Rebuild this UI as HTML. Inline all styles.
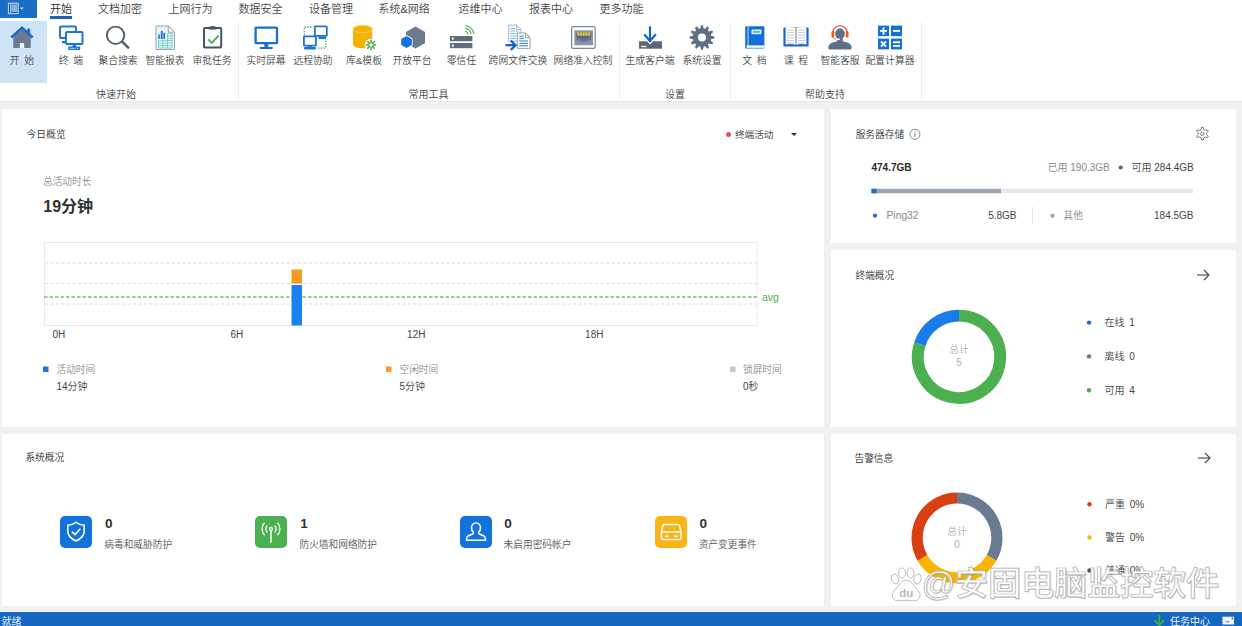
<!DOCTYPE html>
<html lang="zh-CN">
<head>
<meta charset="utf-8">
<title>安固电脑监控软件</title>
<style>
*{box-sizing:border-box;margin:0;padding:0}
html,body{width:1242px;height:626px;overflow:hidden;background:#f1f1f1;}
body{font-family:"Liberation Sans","Noto Sans CJK SC",sans-serif;color:#333;position:relative;font-size:10px;font-weight:350;}
.abs{position:absolute}
#ribbon{position:absolute;left:0;top:0;width:1242px;height:102px;background:#fff;border-bottom:1px solid #e6e6e6}
#appbtn{position:absolute;left:0;top:0;width:36.700px;height:18.400px;background:#1a6ec3}
.tab{position:absolute;top:1px;height:18px;line-height:17px;font-size:11px;color:#444;white-space:nowrap}
.tab.on{color:#2a2a2a}
.bl{position:absolute;top:54px;word-spacing:2px;font-size:9.800px;line-height:14px;color:#4a4a4a;white-space:pre;transform:translateX(-50%)}
.gl{position:absolute;top:88px;font-size:10px;line-height:14px;color:#444;white-space:nowrap;transform:translateX(-50%)}
.sep{position:absolute;top:22px;width:1px;height:77px;background:#eeeeee}
.card{position:absolute;background:#fff}
.ttl{position:absolute;font-size:10px;line-height:14px;color:#333;white-space:nowrap}
.t{position:absolute;white-space:nowrap;line-height:14px;font-size:10px}
#wm{position:absolute;left:921.500px;top:559.500px;font-size:33.300px;line-height:48px;color:#fff;white-space:nowrap;font-weight:500;-webkit-text-stroke:0.7px #ababab;text-shadow:1px 1px 1px rgba(120,120,120,.35);letter-spacing:-0.3px}
#status{position:absolute;left:0;top:612px;width:1242px;height:14px;background:#1567c2;color:#fff;font-size:10px;line-height:14px}
</style>
</head>
<body>
<div id="ribbon">
  <div id="appbtn"></div>
  <div class="tab on" style="left:50px">开始</div>
  <div class="abs" style="left:50px;top:16px;width:22px;height:2.5px;background:#1a62b8"></div>
  <div class="tab" style="left:98px">文档加密</div>
  <div class="tab" style="left:168.500px">上网行为</div>
  <div class="tab" style="left:238.500px">数据安全</div>
  <div class="tab" style="left:309px">设备管理</div>
  <div class="tab" style="left:378.500px">系统&amp;网络</div>
  <div class="tab" style="left:458.500px">运维中心</div>
  <div class="tab" style="left:529px">报表中心</div>
  <div class="tab" style="left:599.500px">更多功能</div>
<div class="abs" style="left:0;top:21px;width:47px;height:62px;background:#cee3f6"></div>
<svg class="abs" style="left:0;top:0" width="1242" height="102" viewBox="0 0 1242 102">
<g><rect x="8.500" y="3.300" width="9.600" height="10.200" fill="none" stroke="#a9d5ff" stroke-width="1.200"/><rect x="10" y="3.300" width="0.900" height="10.200" fill="#a9d5ff"/><rect x="11.400" y="4.600" width="5.600" height="7.500" fill="#8fb2dc"/><rect x="11.400" y="12.100" width="5.600" height="0.700" fill="#0e4a8e"/><rect x="9.100" y="4" width="0.800" height="9" fill="#0e4a8e"/></g><path d="M19.800,7.500 h4.200 l-2.100,2.300z" fill="#b9dcff"/>
<g><polygon points="13.3,37 22,29.3 30.7,37 30.7,48 13.3,48" fill="#6a7a90"/><rect x="27.3" y="28.6" width="2.8" height="6" fill="#1b6ec2"/><polyline points="11.3,37.6 22,27.8 32.7,37.6" fill="none" stroke="#1b6ec2" stroke-width="2.7"/><rect x="19.8" y="43" width="4.4" height="5" fill="#eaf3fc"/></g>
<g fill="none" stroke="#1b75d0" stroke-width="1.9"><rect x="60" y="26.5" width="16" height="11.5" rx="0.8" fill="#fff"/><path d="M62,41 h3 v2.2 h-3z" fill="#1b75d0" stroke="none"/><rect x="66" y="32" width="16.5" height="12" rx="0.8" fill="#fff"/></g><rect x="72.6" y="44" width="3.4" height="3" fill="#1b75d0"/><rect x="68.2" y="46.6" width="12" height="3.4" rx="0.8" fill="#1b75d0"/><rect x="70" y="47.9" width="5.5" height="0.9" fill="#9cd0ff"/><rect x="77" y="47.8" width="1.2" height="1.1" fill="#cfe8ff"/>
<g fill="none" stroke="#56606e"><circle cx="115.600" cy="35.300" r="8.700" stroke-width="1.900"/><line x1="122.4" y1="42" x2="128.3" y2="47.6" stroke-width="2.5" stroke-linecap="round"/></g>
<g><path d="M156,26 h12.3 l6.2,6.2 v17.3 h-18.5z" fill="#e3f5f9" stroke="#8d97a8" stroke-width="0.9"/><path d="M168.3,26 v6.2 h6.2z" fill="#fff" stroke="#8d97a8" stroke-width="0.9"/><g stroke="#6ccdbf" stroke-width="0.8" fill="none"><path d="M158.5,40.5 h13.5 M158.5,43 h13.5 M158.5,45.5 h13.5 M158.5,48 h13.5 M158.5,40.5 v7.5 M163,40.5 v7.5 M167.5,33.5 v14.5 M172,33.5 v14.5 M167.5,33.5 h4.5 M167.5,36 h4.5 M167.5,38.2 h4.5"/></g><rect x="158.3" y="34.5" width="1.5" height="4.5" fill="#1e6bc6"/><rect x="160.8" y="31" width="1.8" height="8" fill="#1e6bc6"/><rect x="163.4" y="32.8" width="1.6" height="6.2" fill="#1e6bc6"/></g>
<g><rect x="204" y="28" width="17.2" height="19.5" rx="0.8" fill="#fafbfc" stroke="#4a5363" stroke-width="2"/><path d="M208.600,29.400 l0.800,-2.800 h1.800 a1.500,1.500 0 0 1 2.800,0 h1.800 l0.800,2.800z" fill="#4a5363"/><polyline points="208.3,39.3 211.8,42.8 218.6,35.6" fill="none" stroke="#4caf50" stroke-width="1.9"/></g>
<g><rect x="255.6" y="27.6" width="21.4" height="15.6" rx="0.6" fill="#fff" stroke="#1a6dc8" stroke-width="2.3"/><rect x="264.4" y="44" width="3.8" height="3.4" fill="#1a6dc8"/><rect x="260" y="47" width="12.6" height="2" fill="#1a6dc8"/></g>
<g><g fill="none" stroke="#3fa63f" stroke-width="1.3" stroke-dasharray="1.3,1.5"><path d="M311.5,27 h-7.2 v8"/><path d="M318,48.2 h7.8 v-9.5"/></g><rect x="314.8" y="26.3" width="12" height="9.6" rx="0.6" fill="#fff" stroke="#1b75d0" stroke-width="1.8"/><rect x="318.5" y="36.6" width="7.5" height="2.4" fill="#1b75d0"/><rect x="303.9" y="36.3" width="12" height="9.4" rx="0.6" fill="#fff" stroke="#1b75d0" stroke-width="1.8"/><rect x="308.2" y="45.6" width="3.4" height="2" fill="#1b75d0"/><rect x="304" y="47" width="12" height="2.6" rx="0.8" fill="#1b75d0"/></g>
<g><path d="M353,29 v15.6 a9.6,3.6 0 0 0 19.2,0 v-15.6z" fill="#f5b200"/><ellipse cx="362.6" cy="29" rx="9.6" ry="3.6" fill="#f5b200" stroke="#fbd35a" stroke-width="0.9"/><circle cx="371" cy="45" r="6.2" fill="#fff"/><g stroke="#3aa83a" stroke-width="1.5"><line x1="372.60" y1="45.00" x2="376.20" y2="45.00"/><line x1="372.13" y1="46.13" x2="374.68" y2="48.68"/><line x1="371.00" y1="46.60" x2="371.00" y2="50.20"/><line x1="369.87" y1="46.13" x2="367.32" y2="48.68"/><line x1="369.40" y1="45.00" x2="365.80" y2="45.00"/><line x1="369.87" y1="43.87" x2="367.32" y2="41.32"/><line x1="371.00" y1="43.40" x2="371.00" y2="39.80"/><line x1="372.13" y1="43.87" x2="374.68" y2="41.32"/></g></g>
<g><polygon points="415.5,26.6 425,32 425,43.3 415.5,48.6 406,43.3 406,32" fill="#6b7a8d"/><polygon points="406.5,35 412.6,38.5 412.6,45.5 406.5,49 400.4,45.5 400.4,38.5" fill="#fff"/><polygon points="406.5,36 411.8,39 411.8,45 406.5,48 401.2,45 401.2,39" fill="#1273de"/></g>
<g><rect x="450" y="36" width="22.4" height="5.2" fill="#5f6b7e"/><rect x="450" y="43" width="22.4" height="5.2" fill="#5f6b7e"/><rect x="452" y="37.5" width="1.7" height="2.2" fill="#fff"/><rect x="452" y="44.5" width="1.7" height="2.2" fill="#fff"/><g fill="none" stroke="#4caf50" stroke-width="1.1"><path d="M465,31.2 a3.8,3.8 0 0 1 3.3,3.3"/><path d="M465.3,28.4 a6.6,6.6 0 0 1 5.8,5.8"/><path d="M465.6,25.6 a9.4,9.4 0 0 1 8.3,8.3"/></g></g>
<g><path d="M508.6,25 h8 l4.4,4.4 v12 h-12.4z" fill="#eef6fd" stroke="#a4afc0" stroke-width="0.8"/><path d="M516.6,25 v4.4 h4.4z" fill="#fff" stroke="#a4afc0" stroke-width="0.8"/><path d="M510.3,28.5 h5 M510.3,31 h8.5 M510.3,33.5 h6 M510.3,36 h6 M510.3,38.5 h6" stroke="#8fc1ee" stroke-width="0.9"/><path d="M517.4,33 h8 l4.6,4.6 v10.8 h-12.6z" fill="#fff" stroke="#8d97a8" stroke-width="0.9"/><path d="M525.4,33 v4.6 h4.6z" fill="#f2f6fa" stroke="#8d97a8" stroke-width="0.9"/><path d="M519.3,36.2 h4.5 M519.3,38.4 h4.5 M519.3,41 h8.7 M519.3,43.4 h8.7 M519.3,45.8 h8.7" stroke="#2a7fd8" stroke-width="1"/><g fill="none" stroke="#1565c0" stroke-width="2.3"><line x1="505.5" y1="45.2" x2="515" y2="45.2"/><polyline points="510.8,40.6 515.6,45.2 510.8,49.8"/></g></g>
<g><defs><linearGradient id="na" x1="0" y1="0" x2="0" y2="1"><stop offset="0" stop-color="#d9c23a"/><stop offset="0.33" stop-color="#e8d13c"/><stop offset="0.42" stop-color="#4e62a8"/><stop offset="0.8" stop-color="#6f7fb5"/><stop offset="1" stop-color="#8d97ab"/></linearGradient></defs><rect x="571.6" y="26.6" width="23.6" height="21.8" rx="1.6" fill="#fcfcfe" stroke="#7d8797" stroke-width="1.2"/><rect x="574.4" y="30.4" width="18.6" height="14.8" fill="#8892a6"/><path d="M576.400,33 h14.600 v6 q-7.300,5.500 -14.600,0z" fill="#59668f"/><path d="M576.400,37 q7.300,4.500 14.600,0 v2 q-7.300,5.500 -14.600,0z" fill="#6b78a2"/><rect x="577" y="32.300" width="13.400" height="3.800" fill="#a8a24a" opacity="0.75"/><g fill="#e6cc3a"><rect x="577.600" y="32.600" width="1.700" height="2.800"/><rect x="580.200" y="32.600" width="1.700" height="2.800"/><rect x="582.800" y="32.600" width="1.700" height="2.800"/><rect x="585.400" y="32.600" width="1.700" height="2.800"/><rect x="588" y="32.600" width="1.700" height="2.800"/></g></g>
<g><rect x="639" y="41.3" width="23" height="7.4" fill="#5b6779"/><polygon points="646.8,41.3 650,44.4 653.2,41.3" fill="#fff"/><rect x="641.3" y="45.8" width="5" height="1.4" fill="#fff"/><g fill="none" stroke="#1565c0" stroke-width="2.2"><line x1="650" y1="26.4" x2="650" y2="41"/><polyline points="644.2,34.2 650,41 655.8,34.2"/></g></g>
<path d="M700.23,28.47 L701.09,25.13 L702.91,25.13 L703.77,28.47 L704.98,28.80 L707.40,26.34 L708.97,27.24 L708.05,30.57 L708.93,31.45 L712.26,30.53 L713.16,32.10 L710.70,34.52 L711.03,35.73 L714.37,36.59 L714.37,38.41 L711.03,39.27 L710.70,40.48 L713.16,42.90 L712.26,44.47 L708.93,43.55 L708.05,44.43 L708.97,47.76 L707.40,48.66 L704.98,46.20 L703.77,46.53 L702.91,49.87 L701.09,49.87 L700.23,46.53 L699.02,46.20 L696.60,48.66 L695.03,47.76 L695.95,44.43 L695.07,43.55 L691.74,44.47 L690.84,42.90 L693.30,40.48 L692.97,39.27 L689.63,38.41 L689.63,36.59 L692.97,35.73 L693.30,34.52 L690.84,32.10 L691.74,30.53 L695.07,31.45 L695.95,30.57 L695.03,27.24 L696.60,26.34 L699.02,28.80Z M698.00,37.50 a4.0,4.0 0 1 0 8.0,0 a4.0,4.0 0 1 0 -8.0,0Z" fill="#5f6f85" fill-rule="evenodd"/>
<g><rect x="745.2" y="26.2" width="19.2" height="22.4" rx="0.8" fill="#1170d8"/><rect x="746.6" y="45.4" width="17.8" height="2.4" fill="#fff"/><rect x="747.6" y="26.2" width="0.9" height="19.2" fill="#cfe4fb"/><rect x="751.4" y="29.6" width="10" height="4.6" rx="0.6" fill="#d6f3fb"/><rect x="753" y="31.2" width="6.8" height="1.4" fill="#2fae7a"/></g>
<g><path d="M783.4,28.6 q0,-1 1,-1 h23.2 q1,0 1,1 v17 q0,1 -1,1 h-23.2 q-1,0 -1,-1z" fill="#1a68c2"/><path d="M785.6,27.6 q5.2,-1.2 10,0.6 v16.6 q-4.8,-1.4 -10,-0.2z" fill="#fff"/><path d="M806.4,27.6 q-5.2,-1.2 -10,0.6 v16.6 q4.8,-1.4 10,-0.2z" fill="#fff"/><path d="M787,30 h7 M787,32.6 h7 M787,35.2 h7 M787,37.8 h7 M787,40.4 h7 M787,43 h7 M798,30 h7 M798,32.6 h7 M798,35.2 h7 M798,37.8 h7 M798,40.4 h7 M798,43 h7" stroke="#b9c6d8" stroke-width="0.9"/><line x1="796" y1="28" x2="796" y2="45" stroke="#c9b49a" stroke-width="0.8"/></g>
<g><path d="M828.300,47.800 q0,-4.200 5.400,-5.600 l3.500,-1 v-2.600 h5.600 v2.600 l3.500,1 q5.400,1.400 5.400,5.600 q0,1.600 -1.600,1.600 h-20.200 q-1.600,0 -1.600,-1.600z" fill="#5f7086"/><ellipse cx="840" cy="33.800" rx="4.800" ry="5.500" fill="#5f7086"/><path d="M832.900,33.500 v-1 a7.100,6.800 0 0 1 14.200,0 v1" fill="none" stroke="#d8431a" stroke-width="1.100"/><rect x="831.500" y="31" width="2.700" height="6.600" rx="1.200" fill="#ec5a1e"/><rect x="845.800" y="31" width="2.700" height="6.600" rx="1.200" fill="#ec5a1e"/><path d="M833,37.400 q0.600,1.600 3.400,1.800" fill="none" stroke="#ec5a1e" stroke-width="0.900"/><rect x="836" y="38.400" width="4" height="1.500" rx="0.700" fill="#fff"/></g>
<g fill="#1371d6"><rect x="878" y="25.6" width="11" height="10.6"/><rect x="891" y="25.6" width="11" height="10.6"/><rect x="878" y="38.6" width="11" height="10.8"/><rect x="891" y="38.6" width="11" height="10.800"/></g><g stroke="#fff" stroke-width="1.900" fill="none"><path d="M880,30.900 h7 M883.500,27.400 v7"/><path d="M893,30.900 h7"/><path d="M881,41.500 l5,5 M886,41.500 l-5,5"/><path d="M893,42.300 h7 M893,45.900 h7"/></g>
</svg>
<div class="bl" style="left:22px">开 始</div>
<div class="bl" style="left:71px">终 端</div>
<div class="bl" style="left:118px">聚合搜索</div>
<div class="bl" style="left:165px">智能报表</div>
<div class="bl" style="left:212px">审批任务</div>
<div class="bl" style="left:266px">实时屏幕</div>
<div class="bl" style="left:313px">远程协助</div>
<div class="bl" style="left:364px">库&amp;模板</div>
<div class="bl" style="left:412px">开放平台</div>
<div class="bl" style="left:461.5px">零信任</div>
<div class="bl" style="left:518px">跨网文件交换</div>
<div class="bl" style="left:583px">网络准入控制</div>
<div class="bl" style="left:650px">生成客户端</div>
<div class="bl" style="left:702px">系统设置</div>
<div class="bl" style="left:754.5px">文 档</div>
<div class="bl" style="left:796px">课 程</div>
<div class="bl" style="left:840px">智能客服</div>
<div class="bl" style="left:890px">配置计算器</div>
<div class="gl" style="left:116px">快速开始</div>
<div class="gl" style="left:428.5px">常用工具</div>
<div class="gl" style="left:675px">设置</div>
<div class="gl" style="left:825px">帮助支持</div>
<div class="sep" style="left:238.0px"></div>
<div class="sep" style="left:619.0px"></div>
<div class="sep" style="left:730.0px"></div>
<div class="sep" style="left:921.0px"></div>
</div>

<div class="card" style="left:1.5px;top:109px;width:822.5px;height:318px"></div>
<div class="t" style="left:26.500px;top:127.700px;color:#333;font-size:9.800px">今日概览</div>
<div class="abs" style="left:725.5px;top:131.800px;width:5.5px;height:5.5px;border-radius:50%;background:#e9505a"></div>
<div class="t" style="left:735px;top:127.5px;color:#333;font-size:9.600px">终端活动</div>
<div class="abs" style="left:791.200px;top:132.600px;width:0;height:0;border-left:3.200px solid transparent;border-right:3.200px solid transparent;border-top:3.800px solid #333"></div>
<div class="t" style="left:43px;top:174.5px;color:#8a8a8a;font-size:9.7px">总活动时长</div>
<div class="t" style="left:43.300px;top:195.800px;color:#303030;font-size:16px;font-weight:bold;line-height:22px">19分钟</div>
<div class="t" style="left:58.8px;top:327.5px;color:#444;transform:translateX(-50%);font-size:10px">0H</div>
<div class="t" style="left:236.8px;top:327.5px;color:#444;transform:translateX(-50%);font-size:10px">6H</div>
<div class="t" style="left:416.3px;top:327.5px;color:#444;transform:translateX(-50%);font-size:10px">12H</div>
<div class="t" style="left:594.3px;top:327.5px;color:#444;transform:translateX(-50%);font-size:10px">18H</div>
<div class="t" style="left:56.5px;top:362.800px;color:#8a8a8a;font-size:9.7px">活动时间</div>
<div class="t" style="left:56.5px;top:379.7px;color:#444">14分钟</div>
<div class="t" style="left:399.5px;top:362.800px;color:#8a8a8a;font-size:9.7px">空闲时间</div>
<div class="t" style="left:399.5px;top:379.7px;color:#444">5分钟</div>
<div class="t" style="left:743px;top:362.800px;color:#8a8a8a;font-size:9.7px">锁屏时间</div>
<div class="t" style="left:743px;top:379.7px;color:#444">0秒</div>
<div class="card" style="left:830.5px;top:109px;width:405px;height:133.5px"></div>
<div class="t" style="left:855.700px;top:127.900px;color:#333;font-size:9.700px">服务器存储</div>
<div class="t" style="left:871.5px;top:161.200px;color:#2b2b2b;font-weight:bold;font-size:10px">474.7GB</div>
<div class="t" style="left:1047.5px;top:161.200px;color:#8a8a8a;font-size:10px">已用 190.3GB</div>
<div class="t" style="left:1131.5px;top:161.200px;color:#444;font-size:10px">可用 284.4GB</div>
<div class="t" style="left:886.5px;top:209.200px;color:#8a8a8a;font-size:10.300px">Ping32</div>
<div class="t" style="right:225.500px;top:209.200px;color:#444;font-size:10px">5.8GB</div>
<div class="t" style="left:1063.5px;top:209.200px;color:#8a8a8a;font-size:9.7px">其他</div>
<div class="t" style="right:48.500px;top:209.200px;color:#444;font-size:10px">184.5GB</div>
<div class="card" style="left:830.5px;top:249.5px;width:405px;height:177.5px"></div>
<div class="t" style="left:855.500px;top:268.500px;color:#333;font-size:9.700px">终端概况</div>
<div class="t" style="left:959px;top:343px;color:#b0b0b0;transform:translateX(-50%);font-size:9.7px">总计</div>
<div class="t" style="left:959px;top:356px;color:#b0b0b0;transform:translateX(-50%)">5</div>
<div class="t" style="left:1104.5px;top:316.1px;color:#444;word-spacing:2px">在线 1</div>
<div class="t" style="left:1104.5px;top:349.9px;color:#444;word-spacing:2px">离线 0</div>
<div class="t" style="left:1104.5px;top:383.8px;color:#444;word-spacing:2px">可用 4</div>
<div class="card" style="left:1.5px;top:434px;width:822.5px;height:172px"></div>
<div class="t" style="left:25.5px;top:451px;color:#333;font-size:9.7px">系统概况</div>
<svg class="abs" style="left:60.2px;top:516.3px" width="32" height="32" viewBox="0 0 32 32"><rect width="32" height="32" rx="5" fill="#1273de"/><path d="M16,6.400 q3.600,2.600 8.200,2.800 v5.800 q0,6.400 -8.200,10 q-8.200,-3.600 -8.200,-10 v-5.800 q4.600,-0.200 8.200,-2.800z" fill="none" stroke="#fff" stroke-width="1.600" stroke-linejoin="round"/><polyline points="12,15.600 15,18.600 20.400,12.800" fill="none" stroke="#fff" stroke-width="1.600"/></svg>
<div class="t" style="left:105px;top:514px;color:#333;font-weight:bold;font-size:13.600px;line-height:20px">0</div>
<div class="t" style="left:104.3px;top:537.8px;color:#555;font-size:9.700px">病毒和威胁防护</div>
<svg class="abs" style="left:255.39999999999998px;top:516.3px" width="32" height="32" viewBox="0 0 32 32"><rect width="32" height="32" rx="5" fill="#4caf50"/><g transform="translate(0 1)" fill="none" stroke="#fff" stroke-width="1.300"><line x1="16" y1="13.500" x2="16" y2="25.800" stroke-width="1.500"/><circle cx="16" cy="12" r="1.500"/><path d="M12.400,8.400 a5,5 0 0 0 0,7.200 M19.600,8.400 a5,5 0 0 1 0,7.200 M9.600,5.800 a8.800,8.800 0 0 0 0,12.400 M22.400,5.800 a8.800,8.800 0 0 1 0,12.400"/></g></svg>
<div class="t" style="left:300.2px;top:514px;color:#333;font-weight:bold;font-size:13.600px;line-height:20px">1</div>
<div class="t" style="left:299.5px;top:537.8px;color:#555;font-size:9.700px">防火墙和网络防护</div>
<svg class="abs" style="left:459.5px;top:516.3px" width="32" height="32" viewBox="0 0 32 32"><rect width="32" height="32" rx="5" fill="#1273de"/><path transform="translate(16 16.500) scale(1.120) translate(-16 -16.500)" d="M16,8 a4,4.300 0 0 1 4,4.300 q0,2.600 -1.700,3.900 q-0.300,1.300 1.200,1.900 l3.600,1.600 q1.300,0.700 1.300,2.300 v1.500 h-16.800 v-1.500 q0,-1.600 1.300,-2.300 l3.600,-1.600 q1.500,-0.600 1.200,-1.900 q-1.700,-1.300 -1.700,-3.900 a4,4.300 0 0 1 4,-4.300z" fill="none" stroke="#fff" stroke-width="1.400" stroke-linejoin="round"/></svg>
<div class="t" style="left:504.3px;top:514px;color:#333;font-weight:bold;font-size:13.600px;line-height:20px">0</div>
<div class="t" style="left:503.6px;top:537.8px;color:#555;font-size:9.700px">未启用密码帐户</div>
<svg class="abs" style="left:654.6px;top:516.3px" width="32" height="32" viewBox="0 0 32 32"><rect width="32" height="32" rx="5" fill="#fbb416"/><g fill="none" stroke="#fff" stroke-width="1.500" stroke-linejoin="round"><path d="M9.600,8.600 h13.200 q1.400,0 1.800,1.400 l1.400,5.800 v5.600 q0,2 -2,2 h-15.600 q-2,0 -2,-2 v-5.600 l1.400,-5.800 q0.400,-1.400 1.800,-1.400z"/><line x1="6.800" y1="16" x2="26" y2="16"/></g><rect x="10" y="19.600" width="3.600" height="1.400" fill="#fff"/><rect x="19" y="19.600" width="3.600" height="1.400" fill="#fff"/></svg>
<div class="t" style="left:699.4px;top:514px;color:#333;font-weight:bold;font-size:13.600px;line-height:20px">0</div>
<div class="t" style="left:698.6999999999999px;top:537.8px;color:#555;font-size:9.700px">资产变更事件</div>
<div class="card" style="left:830.5px;top:434px;width:405px;height:172px"></div>
<div class="t" style="left:854.500px;top:451.500px;color:#333;font-size:9.700px">告警信息</div>
<div class="t" style="left:957px;top:524.5px;color:#b0b0b0;transform:translateX(-50%);font-size:9.7px">总计</div>
<div class="t" style="left:957px;top:537.5px;color:#b0b0b0;transform:translateX(-50%)">0</div>
<div class="t" style="left:1105px;top:497.8px;color:#444;word-spacing:2px">严重 0%</div>
<div class="t" style="left:1105px;top:530.9px;color:#444;word-spacing:2px">警告 0%</div>
<div class="t" style="left:1105px;top:564.0px;color:#444;word-spacing:2px">普通 0%</div>
<svg class="abs" style="left:0;top:0" width="1242" height="626" viewBox="0 0 1242 626">
<rect x="44.5" y="242.5" width="712.5" height="83" fill="none" stroke="#ebebeb" stroke-width="1"/>
<line x1="45" y1="263" x2="757" y2="263" stroke="#dcdcdc" stroke-width="1" stroke-dasharray="3,2.5"/>
<line x1="45" y1="283.5" x2="757" y2="283.5" stroke="#dcdcdc" stroke-width="1" stroke-dasharray="3,2.5"/>
<line x1="45" y1="304" x2="757" y2="304" stroke="#dcdcdc" stroke-width="1" stroke-dasharray="3,2.5"/>
<line x1="44" y1="297" x2="757" y2="297" stroke="#2f9a2f" stroke-width="1" stroke-dasharray="3.5,2"/>
<rect x="291.5" y="269.5" width="10.5" height="14" fill="#f59a23"/>
<rect x="291.5" y="285" width="10.5" height="40.5" fill="#1a82f0"/>
<text x="762" y="300.500" font-size="10.500" fill="#4caf50" font-family="Liberation Sans, sans-serif">avg</text>
<rect x="43" y="366.500" width="5.5" height="5.5" fill="#1a76e0"/>
<rect x="386" y="366.500" width="5.5" height="5.5" fill="#f59a23"/>
<rect x="730" y="366.500" width="5.5" height="5.5" fill="#c8c8c8"/>
<rect x="871.5" y="188.800" width="321.5" height="4.4" fill="#e3e6ea"/>
<rect x="871.5" y="188.800" width="129.5" height="4.4" fill="#9aa4b4"/>
<rect x="871.5" y="188.800" width="5" height="4.4" fill="#1a6fd0"/>
<line x1="1032.5" y1="207" x2="1032.5" y2="224" stroke="#e4e4e4" stroke-width="1"/>
<circle cx="875" cy="215.700" r="2.100" fill="#1a6fd0"/>
<circle cx="1052.500" cy="215.700" r="2.100" fill="#a3a3b8"/>
<circle cx="1120.700" cy="167.500" r="2.100" fill="#5a6472"/>
<circle cx="914.950" cy="134.300" r="5" fill="none" stroke="#777" stroke-width="0.9"/><rect x="914.450" y="133.300" width="1" height="3.600" fill="#777"/><rect x="914.450" y="131.300" width="1" height="1.100" fill="#777"/>
<path d="M1201.03,129.62 L1201.54,127.46 L1203.26,127.46 L1203.77,129.62 L1205.24,130.47 L1207.38,129.84 L1208.23,131.32 L1206.62,132.85 L1206.62,134.55 L1208.23,136.08 L1207.38,137.56 L1205.24,136.93 L1203.77,137.78 L1203.26,139.94 L1201.54,139.94 L1201.03,137.78 L1199.56,136.93 L1197.42,137.56 L1196.57,136.08 L1198.18,134.55 L1198.18,132.85 L1196.57,131.32 L1197.42,129.84 L1199.56,130.47Z" fill="none" stroke="#666" stroke-width="0.9" stroke-linejoin="round"/><circle cx="1202.4" cy="133.7" r="1.700" fill="none" stroke="#666" stroke-width="0.9"/>
<g fill="none" stroke="#444" stroke-width="1.100"><line x1="1197" y1="275" x2="1209" y2="275"/><polyline points="1204,270 1209,275 1204,280"/></g>
<g fill="none" stroke="#444" stroke-width="1.100"><line x1="1198" y1="458" x2="1210" y2="458"/><polyline points="1205,453 1210,458 1205,463"/></g>
<path d="M959.00,315.60 A41.2,41.2 0 1 1 919.82,344.07" fill="none" stroke="#4caf50" stroke-width="11.800"/>
<path d="M919.82,344.07 A41.2,41.2 0 0 1 959.00,315.60" fill="none" stroke="#1a7bea" stroke-width="11.800"/>
<circle cx="1089" cy="322.6" r="2.200" fill="#1a6fd0"/>
<circle cx="1089" cy="356.4" r="2.200" fill="#6a7a90"/>
<circle cx="1089" cy="390.3" r="2.200" fill="#4caf50"/>
<path d="M957.00,498.00 A39.9,39.9 0 0 1 991.55,557.85" fill="none" stroke="#6a7a90" stroke-width="11.2"/>
<path d="M991.55,557.85 A39.9,39.9 0 0 1 922.45,557.85" fill="none" stroke="#f8b500" stroke-width="11.2"/>
<path d="M922.45,557.85 A39.9,39.9 0 0 1 957.00,498.00" fill="none" stroke="#d84012" stroke-width="11.2"/>
<circle cx="1089.500" cy="504.3" r="2.200" fill="#d84012"/>
<circle cx="1089.500" cy="537.4" r="2.200" fill="#f8b500"/>
<circle cx="1089.500" cy="570.5" r="2.200" fill="#4a5363"/>
</svg>
<svg class="abs" style="left:888px;top:564px" width="36" height="40" viewBox="0 0 36 40"><g fill="#fff" stroke="#b5b5b5" stroke-width="0.9"><ellipse cx="7" cy="15" rx="3.600" ry="5" transform="rotate(-18 7 15)"/><ellipse cx="14" cy="9" rx="3.500" ry="5"/><ellipse cx="22.500" cy="9" rx="3.500" ry="5"/><ellipse cx="29.500" cy="15" rx="3.600" ry="5" transform="rotate(18 29.500 15)"/><path d="M18.200,16 q4.500,0 7.500,5 q2,3.200 4.500,5.500 q3,3.200 1.500,7 q-1.500,3.600 -6,3.300 q-4,-0.500 -7.500,-0.500 q-3.500,0 -7.500,0.500 q-4.500,0.300 -6,-3.300 q-1.500,-3.800 1.500,-7 q2.500,-2.300 4.500,-5.500 q3,-5 7.500,-5z"/></g><text x="18.200" y="33" text-anchor="middle" font-family="Liberation Sans, sans-serif" font-weight="bold" font-size="11.500" fill="#b8b8b8">du</text></svg>
<div id="wm">@安固电脑监控软件</div>

<div class="abs" style="left:0;top:610.500px;width:1242px;height:1.500px;background:#fbfbfb"></div>
<div id="status"><span style="position:absolute;left:1.5px;top:2.5px">就绪</span>
<svg class="abs" style="left:1152px;top:0" width="90" height="14" viewBox="0 0 90 14"><g fill="none" stroke="#3fae4a" stroke-width="1.900"><line x1="7.300" y1="3" x2="7.300" y2="14"/><polyline points="2.600,8.200 7.300,13.400 12,8.200"/></g><rect x="70.500" y="4.700" width="11.500" height="7.800" fill="#f4f6f8"/><rect x="73.500" y="8.800" width="4" height="1.800" fill="#b9a9a0"/><rect x="79.600" y="5.600" width="1.400" height="1.600" fill="#2a3f6a"/></svg>
<span style="position:absolute;left:1170px;top:2.500px">任务中心</span></div>
</body>
</html>
